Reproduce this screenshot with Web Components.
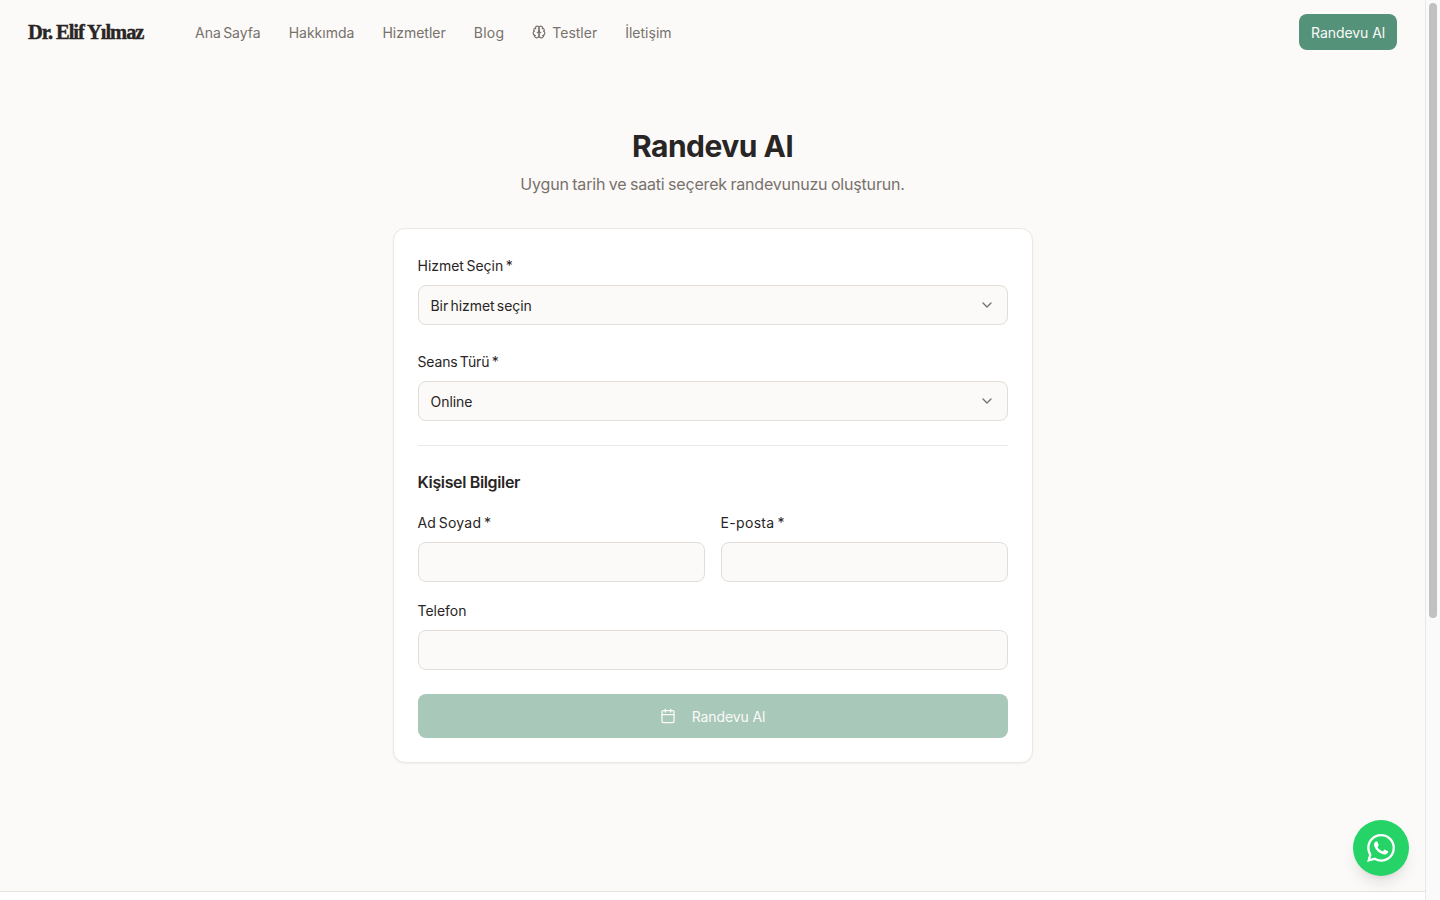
<!DOCTYPE html>
<html lang="tr">
<head>
<meta charset="utf-8">
<title>Randevu Al</title>
<style>
   html { background: #fbfaf8; }
   body {
      margin: 0 15px 0 0;
      font-family: "Inter", "Liberation Sans", sans-serif;
      font-size: 16px;
      line-height: 24px;
      color: #292524;
      background: #fbfaf8;
   }
</style>
</head>
<body>
<site-header></site-header>
<booking-page></booking-page>
<site-footer></site-footer>
<whatsapp-fab></whatsapp-fab>
<page-scrollbar></page-scrollbar>

<script>
const CHEVRON = `<svg width="16" height="16" viewBox="0 0 24 24" fill="none" stroke="#78716c" stroke-width="2" stroke-linecap="round" stroke-linejoin="round"><path d="m6 9 6 6 6-6"/></svg>`;

class SiteHeader extends HTMLElement {
   constructor() {
      super();
      this.attachShadow({ mode: "open" });
      this.shadowRoot.innerHTML = `
      <style>
         :host { display: flex; align-items: center; height: 64px; padding: 0 28px; }
         .logo { font: 700 20.5px/28px "Liberation Serif", serif; letter-spacing: -1.05px; color: #292524; width: 116px; white-space: nowrap; -webkit-text-stroke: 0.4px #292524; }
         nav { display: flex; align-items: center; gap: 28px; margin-left: 51px; flex: 1; }
         a { display: inline-flex; align-items: center; gap: 6px; font-size: 14px; line-height: 20px; padding-top: 1px; color: #78716c; text-decoration: none; white-space: nowrap; word-spacing: -1.6px; }
         .blog { letter-spacing: 0.25px; }
         .brain { margin-top: -1px; }
         .cta { display: block; height: 36px; line-height: 37px; padding: 0 12px; box-sizing: border-box; width: 98px; text-align: center; border-radius: 8px; background: #55927a; color: #fbfaf8; letter-spacing: -0.05px; word-spacing: 0; }
      </style>
      <span class="logo">Dr. Elif Yılmaz</span>
      <nav>
         <a href="#">Ana Sayfa</a>
         <a href="#">Hakkımda</a>
         <a href="#">Hizmetler</a>
         <a class="blog" href="#">Blog</a>
         <a href="#"><svg class="brain" width="14" height="14" viewBox="0 0 24 24" fill="none" stroke="currentColor" stroke-width="2" stroke-linecap="round" stroke-linejoin="round"><path d="M12 5a3 3 0 1 0-5.997.125 4 4 0 0 0-2.526 5.77 4 4 0 0 0 .556 6.588A4 4 0 1 0 12 18Z"/><path d="M12 5a3 3 0 1 1 5.997.125 4 4 0 0 1 2.526 5.77 4 4 0 0 1-.556 6.588A4 4 0 1 1 12 18Z"/><path d="M15 13a4.5 4.5 0 0 1-3-4 4.5 4.5 0 0 1-3 4"/><path d="M17.599 6.5a3 3 0 0 0 .399-1.375"/><path d="M6.003 5.125A3 3 0 0 0 6.401 6.5"/><path d="M3.477 10.896a4 4 0 0 1 .585-.396"/><path d="M19.938 10.5a4 4 0 0 1 .585.396"/><path d="M6 18a4 4 0 0 1-1.967-.516"/><path d="M19.967 17.484A4 4 0 0 1 18 18"/></svg>Testler</a>
         <a href="#">İletişim</a>
      </nav>
      <a class="cta" href="#">Randevu Al</a>`;
   }
}

class FormField extends HTMLElement {
   constructor() {
      super();
      this.attachShadow({ mode: "open" });
   }

   connectedCallback() {
      const label = this.getAttribute("label") ?? "";
      const value = this.getAttribute("value");
      const control = value !== null
         ? `<div class="control" tabindex="0"><span>${value}</span>${CHEVRON}</div>`
         : `<input class="control" type="text" aria-label="${label}">`;
      this.shadowRoot.innerHTML = `
      <style>
         :host { display: block; min-width: 0; }
         label { display: block; box-sizing: border-box; height: 24px; padding-top: 1px; font-size: 14px; line-height: 24px; letter-spacing: var(--label-spacing, -0.02px); word-spacing: -1.4px; color: #292524; margin-bottom: 8px; }
         .control {
            display: flex; align-items: center; justify-content: space-between;
            box-sizing: border-box; width: 100%; height: 40px; padding: 0 12px;
            border: 1px solid #e2ddd8; border-radius: 8px; background: #fbfaf8;
            font: 14px/20px "Inter", "Liberation Sans", sans-serif; letter-spacing: -0.05px; word-spacing: -1.6px; color: #292524;
         }
         span { padding-top: 1px; }
         svg { flex: none; }
      </style>
      <label>${label}</label>
      ${control}`;
   }
}

class BookingPage extends HTMLElement {
   constructor() {
      super();
      this.attachShadow({ mode: "open" });
      this.shadowRoot.innerHTML = `
      <style>
         :host { display: block; padding: 64px 0 128px; }
         h1 { margin: 0 0 8px; font-size: 30px; line-height: 36px; font-weight: 700; letter-spacing: -0.5px; text-align: center; color: #292524; }
         .sub { margin: 0 0 32px; font-size: 16px; line-height: 24px; letter-spacing: -0.18px; word-spacing: -0.8px; text-align: center; color: #78716c; }
         .card {
            box-sizing: border-box; width: 640px; margin: 0 auto; padding: 24px;
            display: flex; flex-direction: column; gap: 24px;
            background: #fff; border: 1px solid #ebe7e3; border-radius: 12px;
            box-shadow: 0 1px 2px rgba(0,0,0,.05);
         }
         hr { margin: 0; border: 0; border-top: 1px solid #ebe7e3; }
         .personal { display: flex; flex-direction: column; gap: 16px; }
         h2 { margin: 0; font-size: 16px; line-height: 24px; font-weight: 600; letter-spacing: -0.35px; color: #292524; }
         .row { display: grid; grid-template-columns: 1fr 1fr; gap: 16px; }
         button {
            display: flex; align-items: center; justify-content: center; gap: 16px;
            height: 44px; border: 0; border-radius: 8px; background: #a8c8b9; color: #fbfaf8;
            font: 14px/20px "Inter", "Liberation Sans", sans-serif; letter-spacing: -0.1px;
         }
         button span { padding-top: 1px; }
      </style>
      <h1>Randevu Al</h1>
      <p class="sub">Uygun tarih ve saati seçerek randevunuzu oluşturun.</p>
      <div class="card">
         <form-field label="Hizmet Seçin *" value="Bir hizmet seçin"></form-field>
         <form-field label="Seans Türü *" value="Online" style="--label-spacing: -0.17px"></form-field>
         <hr>
         <div class="personal">
            <h2>Kişisel Bilgiler</h2>
            <div class="row">
               <form-field label="Ad Soyad *" style="--label-spacing: 0.2px"></form-field>
               <form-field label="E-posta *" style="--label-spacing: 0.33px"></form-field>
            </div>
            <form-field label="Telefon"></form-field>
         </div>
         <button type="button" disabled>
            <svg width="16" height="16" viewBox="0 0 24 24" fill="none" stroke="currentColor" stroke-width="2" stroke-linecap="round" stroke-linejoin="round"><path d="M8 2v4M16 2v4"/><rect x="3" y="4" width="18" height="18" rx="2"/><path d="M3 10h18"/></svg>
            <span>Randevu Al</span>
         </button>
      </div>`;
   }
}

class SiteFooter extends HTMLElement {
   constructor() {
      super();
      this.attachShadow({ mode: "open" });
      this.shadowRoot.innerHTML = `
      <style>
         :host { display: block; height: 410px; background: #fff; border-top: 1px solid #e7e3df; }
      </style>`;
   }
}

class WhatsappFab extends HTMLElement {
   constructor() {
      super();
      this.attachShadow({ mode: "open" });
      this.shadowRoot.innerHTML = `
      <style>
         :host {
            position: fixed; right: 31px; bottom: 24px; width: 56px; height: 56px;
            display: flex; align-items: center; justify-content: center;
            border-radius: 50%; background: #25d366;
            box-shadow: 0 10px 15px -3px rgba(0,0,0,.1), 0 4px 6px -4px rgba(0,0,0,.1);
         }
      </style>
      <svg width="28" height="28" viewBox="0 0 24 24" fill="#fff"><path d="M17.472 14.382c-.297-.149-1.758-.867-2.03-.967-.273-.099-.471-.148-.67.15-.197.297-.767.966-.94 1.164-.173.199-.347.223-.644.075-.297-.15-1.255-.463-2.39-1.475-.883-.788-1.48-1.761-1.653-2.059-.173-.297-.018-.458.13-.606.134-.133.298-.347.446-.52.149-.174.198-.298.298-.497.099-.198.05-.371-.025-.52-.075-.149-.669-1.612-.916-2.207-.242-.579-.487-.5-.669-.51-.173-.008-.371-.01-.57-.01-.198 0-.52.074-.792.372-.272.297-1.04 1.016-1.04 2.479 0 1.462 1.065 2.875 1.213 3.074.149.198 2.096 3.2 5.077 4.487.709.306 1.262.489 1.694.625.712.227 1.36.195 1.871.118.571-.085 1.758-.719 2.006-1.413.248-.694.248-1.289.173-1.413-.074-.124-.272-.198-.57-.347m-5.421 7.403h-.004a9.87 9.87 0 01-5.031-1.378l-.361-.214-3.741.982.998-3.648-.235-.374a9.86 9.86 0 01-1.51-5.26c.001-5.45 4.436-9.884 9.888-9.884 2.64 0 5.122 1.03 6.988 2.898a9.825 9.825 0 012.893 6.994c-.003 5.45-4.437 9.884-9.885 9.884m8.413-18.297A11.815 11.815 0 0012.05 0C5.495 0 .16 5.335.157 11.892c0 2.096.547 4.142 1.588 5.945L.057 24l6.305-1.654a11.882 11.882 0 005.683 1.448h.005c6.554 0 11.89-5.335 11.893-11.893a11.821 11.821 0 00-3.48-8.413z"/></svg>`;
   }
}

// the window's own scrollbar does not show in the photograph
class PageScrollbar extends HTMLElement {
   constructor() {
      super();
      this.attachShadow({ mode: "open" });
      this.shadowRoot.innerHTML = `
      <style>
         :host {
            position: fixed; top: 0; right: 0; bottom: 0; width: 15px; box-sizing: border-box;
            padding: 3px 3px 0 3px; background: #fafafa; border-left: 1px solid #e8e8e8;
         }
         div { height: 615px; border-radius: 4px; background: #c1c1c1; }
      </style>
      <div></div>`;
   }
}

customElements.define("form-field", FormField);
customElements.define("site-header", SiteHeader);
customElements.define("booking-page", BookingPage);
customElements.define("site-footer", SiteFooter);
customElements.define("whatsapp-fab", WhatsappFab);
customElements.define("page-scrollbar", PageScrollbar);
</script>
</body>
</html>
